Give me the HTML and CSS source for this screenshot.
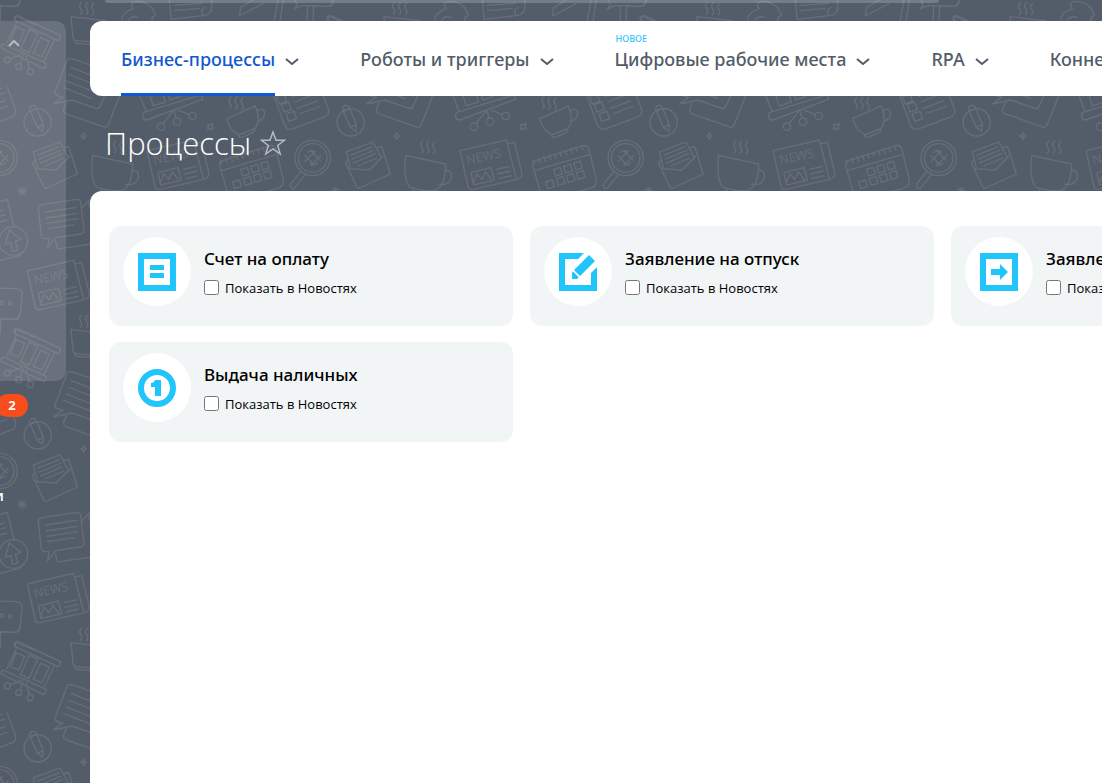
FILE: index.html
```html
<!DOCTYPE html>
<html lang="ru">

<head>
    <meta charset="UTF-8">
    <meta name="viewport" content="width=device-width, initial-scale=1.0">
    <title>Процессы</title>
    <link rel="stylesheet" href="styles.css">
</head>

<body>
    <svg class="backdrop" aria-hidden="true">
        <defs>
            <g id="steam">
                <path d="M8 0q-12 10-4 20t-2 18M26 0q-12 10-4 20t-2 18M44 2q-12 10-4 20t-2 18" />
            </g>
            <g id="news">
                <path d="M441 452L580 420L610 536M441 452L465 560q3 10 14 8L612 538q18-6 14-22L604 427L584 431M474 518l60-15 10 38-62 14zM480 550l12-28 14 16 12-22 18 24M550 508l40-9M553 522l40-9M556 536l40-9" />
                <text x="463" y="493" transform="rotate(-12 465 493)">NEWS</text>
            </g>
            <g id="doodles">
                <!-- stand -->
                <path d="M52 46L180 106q4 10-6 16L46 62q-2-12 6-16zM50 66L20 130M164 118L132 184M10 132L138 190q2 12-6 16L4 144q-2-10 6-12zM48 80l26 12-18 40-24-10zM88 88l26 12-28 58-24-12zM122 112l26 12-22 46-26-10zM70 164l-8 26M66 162L32 176M78 168l10 38" />
                <circle cx="22" cy="180" r="9" /><circle cx="56" cy="200" r="9" /><circle cx="91" cy="215" r="9" />
                <use href="#steam" x="238" y="6" />
                <path d="M213 50L318 62L300 128L228 122q-8-2-9-10zM224 122q2 8 8 8L298 136" />
                <!-- top row -->
                <path d="M366 62q-2-24 34-36q-16-20 14-22q42 4 52 42l-10 6q4 14-16 20M385 62q10-16 30-10M508 0L514 60M520 16L608 10M522 32L600 25M634 0q8 42-20 46L514 58M610 48q-12-20 6-26M718 48L722 22L760 0M718 48L790 10M834 0L822 64M850 0L840 64M884 0l8 14-8 12 24-10L978 20q18 0 20-18M922 18V64M940 18V64M984 48l62 26M984 48q-8 10 4 16" />
                <!-- messages -->
                <path d="M214 176q-12-2-14 8L166 274q-4 10 8 14l14 4L160 312L216 300L290 326q8 0 10-8L346 220L214 176M212 202L300 236M204 222L292 256M196 242L284 276M190 262L276 296M200 308L191 326q-2 12 8 16L314 382q8 0 10-6L366 270" />
                <!-- board -->
                <path d="M428 350q-2-10 6-14L598 286q10 2 10 12L440 360q-10 0-12-10zM416 278L438 334M576 270l14 20M448 280l12 38 36-12-10-36M500 270l10 30 30-10-10-30M520 332L490 370M522 332l6 22M530 328l38 16" />
                <circle cx="483" cy="380" r="11" /><circle cx="531" cy="365" r="11" /><circle cx="578" cy="348" r="11" />
                <use href="#steam" x="686" y="290" />
                <path d="M680 356L766 318q18 46-2 68L718 404q-28-10-38-48zM714 404q4 10 12 8L758 398q8-4 6-12M770 334q20-14 24 4q0 20-22 26" />
                <!-- checklist -->
                <path d="M815 270L854 376q6 14 20 12L976 350q14-8 9-24L960 260M830 290l22-8 8 22-22 8zM844 314l22-8 8 22-22 8zM858 342l24-8 8 22-24 8zM876 290l70-26M884 306l70-28M890 326l64-24M898 342l64-24" />
                <circle cx="113" cy="367" r="41" />
                <path d="M88 326q6-16 20-6L130 374L128 394L112 382zM90 334l20-8M112 382l18-8" />
                <path d="M251 396q0 12 10 12q-10 0-10 12q0-12-10-12q10 0 10-12zM622 372q8 6 18-2q-6 8 0 18q-8-6-18 2q6-8 0-18z" />
                <use href="#steam" x="322" y="422" />
                <path d="M278 466L398 492q-2 64-26 76q-20 12-80-6q-22-20-14-96zM396 512q20-4 20 18q-8 30-40 22M300 568q4 10 14 12h40" />
                <use href="#news" />
                <use href="#news" x="-359" y="361" />
                <!-- calendar -->
                <path d="M690 604L658 494q0-10 10-12L812 436q12 0 16 12L850 540q2 16-12 22L712 604M664 512L828 464M666 494l-6-16M682 490l-6-16M698 485l-6-16M714 480l-6-16M730 476l-6-16M746 471l-6-16M762 466l-6-16M778 461l-6-16M794 456l-6-16M810 451l-6-16M722 508l20-6 6 20-20 6zM752 499l20-6 6 20-20 6zM782 490l20-6 6 20-20 6zM698 546l20-6 6 20-20 6zM730 536l20-6 6 20-20 6zM760 527l20-6 6 20-20 6zM790 518l20-6 6 20-20 6z" />
                <!-- magnifier -->
                <circle cx="938" cy="474" r="53" /><circle cx="938" cy="474" r="43" />
                <path d="M902 514L872 552q-4 14 10 14L916 524M914 466l30 30M930 450l32 32M914 486l32-34M932 498l32-34M922 458q12-14 24 0M930 488q12 14 24 0" />
                <!-- letter -->
                <path d="M104 482L97 488L132 562q2 4 8 2L232 522L206 440l-16 4M112 504L100 456L180 426L206 474M104 506L168 510L210 468M112 466L178 440M116 478L184 450M120 490L188 460M134 498L192 474" />
                <path d="M67 560v28M57 564l20 20M77 564l-20 20M53 574h28" />
                <!-- upload -->
                <circle cx="40" cy="723" r="43" />
                <path d="M28 690L62 718L46 724L54 750L38 754L32 728L16 732zM-40 616L22 598L42 680M-30 640L12 630M-30 656L18 644M-30 672L22 660M-20 786L60 766L74 750" />
                <!-- chat -->
                <path d="M126 614L230 598q10 0 12 8L252 690q0 10-10 12L166 713L143 743L147 716L136 716q-10 0-12-10L115 626q0-10 11-12zM135 636L230 622M138 654L232 640M140 670L234 656M142 686L224 674M166 720L170 740q2 8 10 6L330 724L316 640M246 624L266 602L268 622" />
                <path d="M-60 862L50 866q18 2 16 20L60 946q-2 12-16 12L4 955L-6 1000" />
                <circle cx="5" cy="908" r="5" /><circle cx="30" cy="910" r="5" />
            </g>
            <pattern id="wallpaper" width="313" height="313" patternUnits="userSpaceOnUse" viewBox="0 0 939 939">
                <use href="#doodles" />
                <use href="#doodles" x="-939" />
                <use href="#doodles" x="939" />
                <use href="#doodles" y="-939" />
            </pattern>
        </defs>
        <rect width="100%" height="100%" fill="url(#wallpaper)" />
    </svg>

    <div class="app">
        <aside class="sidebar">
            <div class="sidebar-group">
                <button class="collapse" aria-label="Свернуть">
                    <svg width="14" height="10" viewBox="0 0 14 10"><path d="M2 8l5-5 5 5" /></svg>
                </button>
            </div>
            <span class="counter">2</span>
            <a class="sidebar-link" href="#">и</a>
        </aside>

        <main class="main">
            <div class="topbar"></div>

            <nav class="menu">
                <div class="menu-item active">
                    <a href="#">Бизнес-процессы</a>
                    <button aria-label="Открыть"><svg width="14" height="10" viewBox="0 0 14 10"><path d="M1 2l6 5 6-5" /></svg></button>
                </div>
                <div class="menu-item">
                    <a href="#">Роботы и триггеры</a>
                    <button aria-label="Открыть"><svg width="14" height="10" viewBox="0 0 14 10"><path d="M1 2l6 5 6-5" /></svg></button>
                </div>
                <div class="menu-item">
                    <span class="new-label">НОВОЕ</span>
                    <a href="#">Цифровые рабочие места</a>
                    <button aria-label="Открыть"><svg width="14" height="10" viewBox="0 0 14 10"><path d="M1 2l6 5 6-5" /></svg></button>
                </div>
                <div class="menu-item">
                    <a href="#">RPA</a>
                    <button aria-label="Открыть"><svg width="14" height="10" viewBox="0 0 14 10"><path d="M1 2l6 5 6-5" /></svg></button>
                </div>
                <div class="menu-item">
                    <a href="#">Коннекторы</a>
                </div>
            </nav>

            <header class="page-header">
                <h1>Процессы</h1>
                <button class="favorite" aria-label="В избранное">
                    <svg width="26" height="26" viewBox="0 0 26 26"><path d="M13 2l3 8.300h8.500l-6.800 5.200 2.500 8.500L13 19l-7.200 5 2.500-8.500L1.500 10.300H10z" /></svg>
                </button>
            </header>

            <section class="content">
                <div class="card">
                    <div class="card-icon">
                        <svg width="38" height="38" viewBox="0 0 38 38"><path class="frame" d="M3 3h32v32H3z" /><path d="M12 12h14v5H12zM12 20h14v5H12z" /></svg>
                    </div>
                    <div class="card-info">
                        <a class="card-title" href="#">Счет на оплату</a>
                        <label><input type="checkbox"> Показать в Новостях</label>
                    </div>
                </div>
                <div class="card">
                    <div class="card-icon">
                        <svg width="38" height="38" viewBox="0 0 38 38"><path d="M0 0h25l-6 6H6v26h26V20l6-6v24H0zM30 2l6 6-15 15-6-6zM14 18l6 6-2 2h-5v-6z" /><path class="gap" d="M13 17l8 8" /></svg>
                    </div>
                    <div class="card-info">
                        <a class="card-title" href="#">Заявление на отпуск</a>
                        <label><input type="checkbox"> Показать в Новостях</label>
                    </div>
                </div>
                <div class="card">
                    <div class="card-icon">
                        <svg width="38" height="38" viewBox="0 0 38 38"><path class="frame" d="M3 3h32v32H3z" /><path d="M11 16h9v-5l8 8-8 8v-5h-9z" /></svg>
                    </div>
                    <div class="card-info">
                        <a class="card-title" href="#">Заявление на командировку</a>
                        <label><input type="checkbox"> Показать в Новостях</label>
                    </div>
                </div>
                <div class="card">
                    <div class="card-icon">
                        <svg width="38" height="38" viewBox="0 0 38 38"><circle class="frame" cx="19" cy="19" r="16" /><path d="M17 11h6v16h-6V18h-4v-4q3 0 4-3z" /></svg>
                    </div>
                    <div class="card-info">
                        <a class="card-title" href="#">Выдача наличных</a>
                        <label><input type="checkbox"> Показать в Новостях</label>
                    </div>
                </div>
            </section>
        </main>
    </div>
</body>

</html>
```
FILE: styles.css
```css
* {
    box-sizing: border-box;
}

body {
    margin: 0;
    background: #535c69;
    font-family: "Open Sans", "Noto Sans", sans-serif;
    color: #000;
    overflow: hidden;
}

a {
    color: inherit;
    text-decoration: none;
}

button {
    display: flex;
    padding: 0;
    border: none;
    background: none;
    color: inherit;
    cursor: pointer;
}

button path {
    fill: none;
    stroke: currentColor;
    stroke-width: 2;
}

/* wallpaper */
.backdrop {
    position: absolute;
    top: 0;
    left: 0;
    width: 100%;
    height: 100%;
    z-index: -1;
}

#doodles {
    fill: none;
    stroke: #656d78;
    stroke-width: 4;
}

#news text {
    font-size: 38px;
    fill: #656d78;
    stroke: none;
}

.app {
    display: flex;
    min-height: 100vh;
}

/* sidebar */
.sidebar {
    flex: none;
    width: 90px;
    padding-top: 21px;
    color: #fff;
}

.sidebar-group {
    width: 66px;
    height: 360px;
    padding: 17px 7px;
    border-radius: 0 10px 10px 0;
    background: rgba(255, 255, 255, 0.13);
}

.collapse {
    color: #b6bac0;
}

.counter {
    display: block;
    width: 32px;
    margin: 13px 0 0 -4px;
    border-radius: 12px;
    background: #f94c1c;
    font-size: 13px;
    font-weight: 700;
    line-height: 23px;
    text-align: center;
}

.sidebar-link {
    display: block;
    width: 4px;
    margin-top: 68px;
    font-size: 15px;
    font-weight: 600;
    line-height: 20px;
    direction: rtl;
}

/* main column */
.main {
    flex: 1;
    min-width: 0;
    display: flex;
    flex-direction: column;
}

.topbar {
    width: 834px;
    height: 3px;
    margin: 0 0 18px 15px;
    border-radius: 0 0 10px 10px;
    background: rgba(255, 255, 255, 0.2);
}

.menu {
    display: flex;
    gap: 61px;
    height: 75px;
    padding-left: 31px;
    border-radius: 12px 0 0 12px;
    background: #fff;
    color: #525c69;
    font-family: "Noto Sans", "Open Sans", sans-serif;
    font-size: 18px;
    font-weight: 500;
    line-height: 24px;
    white-space: nowrap;
    overflow: hidden;
}

.menu-item {
    position: relative;
    display: flex;
    gap: 10px;
}

.menu-item a {
    padding: 26px 0 22px;
}

.menu-item button {
    padding-top: 36px;
}

.menu-item.active a {
    border-bottom: 3px solid #1058d0;
    color: #1058d0;
}

.new-label {
    position: absolute;
    top: 12px;
    left: 1px;
    color: #2fc6f6;
    font-size: 9px;
    line-height: 12px;
}

.page-header {
    display: flex;
    align-items: center;
    gap: 9px;
    height: 95px;
    padding: 0 0 2px 15px;
    color: #fff;
}

h1 {
    margin: 0;
    font-size: 31px;
    font-weight: 300;
    line-height: 44px;
}

.favorite {
    color: #b6bac0;
}

.favorite path {
    stroke-width: 1.5;
}

/* process cards */
.content {
    flex: 1;
    display: grid;
    grid-template-columns: repeat(3, 404px);
    align-content: start;
    gap: 16px 17px;
    padding: 35px 19px;
    border-radius: 12px 0 0 0;
    background: #fff;
    overflow: hidden;
}

.card {
    display: flex;
    gap: 13px;
    height: 100px;
    padding: 11px 14px;
    border-radius: 12px;
    background: #f1f5f6;
}

.card-icon {
    flex: none;
    display: flex;
    align-items: center;
    justify-content: center;
    width: 68px;
    height: 69px;
    border-radius: 50%;
    background: #fff;
    fill: #20c5fb;
}

.card-icon .frame {
    fill: none;
    stroke: #20c5fb;
    stroke-width: 6;
}

.card-icon .gap {
    stroke: #fff;
    stroke-width: 1;
}

.card-info {
    padding-top: 10px;
    white-space: nowrap;
}

.card-title {
    display: block;
    font-family: "Noto Sans", "Open Sans", sans-serif;
    font-size: 17px;
    font-weight: 500;
    line-height: 24px;
}

.card label {
    display: flex;
    align-items: center;
    gap: 6px;
    margin-top: 6px;
    font-size: 13px;
    line-height: 22px;
}

.card input {
    width: 15px;
    height: 15px;
    margin: 0 0 2px;
}
```
